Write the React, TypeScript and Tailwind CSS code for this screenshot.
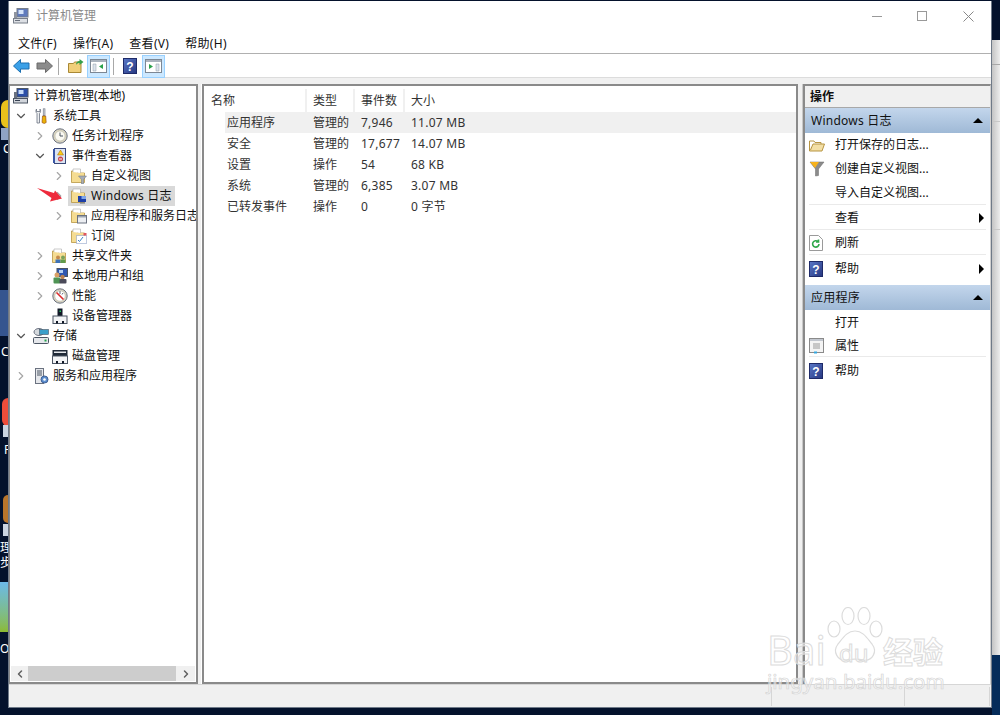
import type { ReactNode } from 'react';
import { ChevronDown, ChevronRight, ChevronLeft } from 'lucide-react';

function Ico({ children, size = 16 }: { children: ReactNode; size?: number }) {
  return (
    <svg width={size} height={size} viewBox="0 0 16 16" className="shrink-0">
      {children}
    </svg>
  );
}

function Computer({ size = 16, dim }: { size?: number; dim?: boolean }) {
  return (
    <Ico size={size}>
      <g opacity={dim ? 0.75 : 1}>
        <rect x="4" y="0.500" width="11" height="8.500" fill="#2b4fa8" stroke="#4b5563" />
        <rect x="5.500" y="2" width="5" height="4" fill="#c7dcf7" />
        <rect x="1" y="4" width="3" height="7" fill="#6b7280" />
        <rect x="0.500" y="10.500" width="14" height="4.500" fill="#d1d5db" stroke="#4b5563" />
        <rect x="2" y="12" width="5" height="1" fill="#374151" />
      </g>
    </Ico>
  );
}

function Tools() {
  return (
    <Ico>
      <path d="M3.500 1C2.500 2.500 2.800 4.500 4 5.500V15H6.500V5.500C7.700 4.500 8 2.500 7 1V3.500H3.500z" fill="#eceef0" stroke="#6b7280" strokeWidth="0.800" />
      <rect x="10.200" y="0.800" width="1.800" height="7" fill="#d1d5db" stroke="#6b7280" strokeWidth="0.600" />
      <path d="M9.500 8h3.200l.5 6.500-2 1-2.200-1z" fill="#eab308" stroke="#92400e" strokeWidth="0.600" />
    </Ico>
  );
}

function Clock() {
  return (
    <Ico>
      <circle cx="8" cy="8" r="7.200" fill="#d8d3c0" stroke="#6b7280" />
      <circle cx="8" cy="8" r="5" fill="#fbfaf3" stroke="#b8b8a8" strokeWidth="0.600" />
      <path d="M8 4.500V8h3" fill="none" stroke="#4b5563" strokeWidth="1" />
    </Ico>
  );
}

function EventViewer() {
  return (
    <Ico>
      <rect x="2.500" y="0.500" width="11" height="15" fill="#dbe4f3" stroke="#3b4a7a" />
      <rect x="1" y="1" width="2" height="14" fill="#3a56a5" />
      <path d="M8.500 2l3 5h-6z" fill="#facc15" stroke="#a16207" strokeWidth="0.500" />
      <circle cx="8.500" cy="11" r="2.500" fill="#c8414b" />
      <rect x="7" y="10.500" width="3" height="1" fill="#fff" />
    </Ico>
  );
}

function FolderBase() {
  return (
    <>
      <path d="M0.500 3V14.500H13.500V5H7L6 3z" fill="#f5dc92" stroke="#b79543" strokeWidth="0.800" />
      <path d="M2 4V1h7.500v4" fill="#fff" stroke="#a8a8a8" strokeWidth="0.600" />
      <rect x="1" y="5" width="12" height="9" fill="#f5dc92" />
    </>
  );
}

function FolderFilter() {
  return (
    <Ico>
      <FolderBase />
      <path d="M7.500 8h8l-3 3.500V16h-2v-4.500z" fill="#a7adb5" stroke="#6b7280" strokeWidth="0.500" />
    </Ico>
  );
}

function FolderWin() {
  return (
    <Ico>
      <FolderBase />
      <rect x="7" y="8" width="8" height="6" fill="#1d3fa8" />
      <rect x="10.500" y="8" width="4.500" height="3" fill="#7ea5ea" />
      <rect x="9" y="14.500" width="5" height="1" fill="#6b7280" />
    </Ico>
  );
}

function FolderBox() {
  return (
    <Ico>
      <FolderBase />
      <rect x="6.500" y="7.500" width="9" height="7.500" fill="#eceef2" stroke="#6b7280" />
      <rect x="7" y="8" width="8" height="1.500" fill="#9ca3af" />
    </Ico>
  );
}

function FolderSub() {
  return (
    <Ico>
      <FolderBase />
      <rect x="5.500" y="7.500" width="10" height="8" fill="#fff" stroke="#7f95c0" strokeDasharray="1 1" />
      <path d="M7 12l1.500 1.500L12 9" fill="none" stroke="#3b82c4" />
      <rect x="12.500" y="5" width="3" height="2.500" fill="#e0555f" />
    </Ico>
  );
}

function FolderShare() {
  return (
    <Ico>
      <FolderBase />
      <circle cx="6" cy="9.500" r="2" fill="#c58a4c" />
      <circle cx="11" cy="9.500" r="2" fill="#7aa25a" />
      <rect x="3.500" y="11.500" width="5" height="3.500" fill="#3f72b5" />
      <rect x="8.500" y="11.500" width="5" height="3.500" fill="#5f9b4c" />
    </Ico>
  );
}

function Users() {
  return (
    <Ico>
      <rect x="5" y="0.500" width="10.500" height="8" fill="#2f57b0" stroke="#4b5563" />
      <rect x="7" y="2" width="4" height="3" fill="#b6d0f2" />
      <circle cx="5" cy="7" r="2.500" fill="#d9a066" />
      <rect x="1.500" y="9.500" width="7" height="6" rx="1" fill="#4f9455" />
      <circle cx="10.500" cy="9" r="2.200" fill="#b98050" />
      <rect x="7.500" y="11" width="7" height="4.500" rx="1" fill="#4a4a5a" />
    </Ico>
  );
}

function Gauge() {
  return (
    <Ico>
      <circle cx="8" cy="8" r="7.200" fill="#d8d3c0" stroke="#6b7280" />
      <circle cx="8" cy="8" r="5.200" fill="#fff" stroke="#b3b3a3" strokeWidth="0.500" />
      <path d="M4.500 4.500l7 7" stroke="#d92b2b" strokeWidth="1.600" />
      <path d="M8 3v3M11 5l-1 1.500" stroke="#374151" strokeWidth="0.800" />
    </Ico>
  );
}

function Device() {
  return (
    <Ico>
      <rect x="5.500" y="0.500" width="5" height="8" fill="#111827" />
      <rect x="7.500" y="2.500" width="1.500" height="1.500" fill="#22c55e" />
      <rect x="1" y="8" width="14" height="7.500" fill="#f3f4f6" stroke="#4b5563" />
      <rect x="4" y="13" width="2" height="2.500" fill="#111827" />
      <rect x="10" y="13" width="2" height="2.500" fill="#111827" />
    </Ico>
  );
}

function Storage() {
  return (
    <Ico>
      <ellipse cx="6" cy="4" rx="5" ry="3.500" fill="#d5d9dd" stroke="#6b7280" />
      <rect x="6.500" y="1.500" width="9" height="5" fill="#3a9ec9" stroke="#4b5563" strokeWidth="0.600" />
      <rect x="0.500" y="9.500" width="15" height="6" rx="1" fill="#e5e7eb" stroke="#4b5563" />
      <rect x="11.500" y="11.500" width="2" height="2" fill="#22a34a" />
    </Ico>
  );
}

function Disk() {
  return (
    <Ico>
      <rect x="0.500" y="2" width="15" height="6" fill="#1f2937" />
      <rect x="2" y="3.500" width="12" height="1.500" fill="#e5e7eb" />
      <rect x="0.500" y="8" width="15" height="7.500" fill="#f3f4f6" stroke="#4b5563" />
      <rect x="4" y="13" width="2" height="2.500" fill="#111827" />
      <rect x="10" y="13" width="2" height="2.500" fill="#111827" />
    </Ico>
  );
}

function Services() {
  return (
    <Ico>
      <rect x="2.500" y="0.500" width="8" height="15" fill="#e5e7eb" stroke="#6b7280" />
      <path d="M4 3h5M4 5h5M4 7h5" stroke="#4b5563" />
      <circle cx="11.500" cy="11.500" r="3.500" fill="#5b8ecf" stroke="#3f5f94" />
      <circle cx="11.500" cy="11.500" r="1.300" fill="#fff" />
    </Ico>
  );
}

function Help({ size = 16 }: { size?: number }) {
  return (
    <svg width={size - 2} height={size} viewBox="0 0 14 16" className="shrink-0">
      <defs>
        <linearGradient id="helpBg" x1="0" y1="0" x2="1" y2="1">
          <stop offset="0" stopColor="#5a78c8" />
          <stop offset="1" stopColor="#26367f" />
        </linearGradient>
      </defs>
      <rect x="0.500" y="0.500" width="13" height="15" fill="url(#helpBg)" stroke="#1e2a68" />
      <text x="7" y="12.500" textAnchor="middle" fontSize="12" fontWeight="700" fill="#fff" fontFamily="Liberation Sans, sans-serif">?</text>
    </svg>
  );
}

const tree = [
  { pad: 'pl-[3px]', icon: <Computer />, label: '计算机管理(本地)', root: true },
  { pad: 'pl-[5px]', open: true, icon: <Tools />, label: '系统工具' },
  { pad: 'pl-[24px]', closed: true, icon: <Clock />, label: '任务计划程序' },
  { pad: 'pl-[24px]', open: true, icon: <EventViewer />, label: '事件查看器' },
  { pad: 'pl-[43px]', closed: true, icon: <FolderFilter />, label: '自定义视图' },
  { pad: 'pl-[43px]', closed: true, icon: <FolderWin />, label: 'Windows 日志', selected: true },
  { pad: 'pl-[43px]', closed: true, icon: <FolderBox />, label: '应用程序和服务日志' },
  { pad: 'pl-[43px]', icon: <FolderSub />, label: '订阅' },
  { pad: 'pl-[24px]', closed: true, icon: <FolderShare />, label: '共享文件夹' },
  { pad: 'pl-[24px]', closed: true, icon: <Users />, label: '本地用户和组' },
  { pad: 'pl-[24px]', closed: true, icon: <Gauge />, label: '性能' },
  { pad: 'pl-[24px]', icon: <Device />, label: '设备管理器' },
  { pad: 'pl-[5px]', open: true, icon: <Storage />, label: '存储' },
  { pad: 'pl-[24px]', icon: <Disk />, label: '磁盘管理' },
  { pad: 'pl-[5px]', closed: true, icon: <Services />, label: '服务和应用程序' },
];

const logs = [
  ['应用程序', '管理的', '7,946', '11.07 MB'],
  ['安全', '管理的', '17,677', '14.07 MB'],
  ['设置', '操作', '54', '68 KB'],
  ['系统', '管理的', '6,385', '3.07 MB'],
  ['已转发事件', '操作', '0', '0 字节'],
];

function ActionHeader({ label }: { label: string }) {
  return (
    <div className="h-[25px] flex items-center justify-between pl-[6px] pr-[7px] bg-gradient-to-b from-[#c3d6ec] to-[#9fb9d6] text-[#111]">
      <span className="tracking-[0.25px]">{label}</span>
      <span className="w-0 h-0 border-x-[5px] border-x-transparent border-b-[5px] border-b-black" />
    </div>
  );
}

function ActionItem({ icon, label, arrow, line, h = 'h-[24px]' }: { icon?: ReactNode; label: string; arrow?: boolean; line?: boolean; h?: string }) {
  return (
    <div className={`${h} mx-[4px] pt-[2px] flex items-center relative ${line ? 'border-b border-[#eaeaea]' : ''}`}>
      <span className="w-[26px] flex justify-start shrink-0">{icon}</span>
      <span className="text-[#111]">{label}</span>
      {arrow && <span className="absolute right-[2px] w-0 h-0 border-y-[5px] border-y-transparent border-l-[5px] border-l-black" />}
    </div>
  );
}

function DesktopText({ className, children }: { className: string; children: ReactNode }) {
  return <span className={`absolute text-white text-[12px] leading-[14px] ${className}`}>{children}</span>;
}

export default function App() {
  return (
    <div className="relative w-[1000px] h-[715px] overflow-hidden bg-[#04122c] text-[12px] font-['Noto_Sans','Noto_Sans_CJK_SC',sans-serif]">
      {/* desktop behind the window */}
      <div className="absolute left-0 top-[290px] w-[8px] h-[46px] bg-[#35558f]" />
      <div className="absolute left-[1px] top-[100px] w-[7px] h-[28px] rounded-l-full bg-[#e9c21c]" />
      <div className="absolute left-[1px] top-[128px] w-[7px] h-[12px] bg-[#8fa3c4]" />
      <div className="absolute left-[2px] top-[398px] w-[6px] h-[28px] rounded-l-full bg-[#ee4d3a]" />
      <div className="absolute left-[3px] top-[425px] w-[5px] h-[12px] bg-[#cbd5e1]" />
      <div className="absolute left-[3px] top-[495px] w-[5px] h-[28px] rounded-l-full bg-[#b9762c]" />
      <div className="absolute left-[3px] top-[524px] w-[5px] h-[12px] bg-[#cbd5e1]" />
      <div className="absolute left-0 top-[582px] w-[8px] h-[50px] bg-gradient-to-b from-[#6cb8e8] to-[#8cba2e]" />
      <DesktopText className="left-[3px] top-[142px]">C</DesktopText>
      <DesktopText className="left-[1px] top-[345px]">C</DesktopText>
      <DesktopText className="left-[4px] top-[443px]">F</DesktopText>
      <DesktopText className="left-0 top-[541px]">理</DesktopText>
      <DesktopText className="left-0 top-[556px]">步</DesktopText>
      <DesktopText className="left-0 top-[642px]">OL</DesktopText>
      <div className="absolute left-[992px] top-[40px] w-[8px] h-[615px] flex flex-col bg-gradient-to-r from-[#c4c4c4] to-[#ededed]">
        <div className="h-[25px] border-b border-[#a8a8a8]" />
        <div className="h-[57px] border-b border-[#c8c8c8]" />
        <div className="h-[108px] border-b border-[#c8c8c8]" />
      </div>
      <div className="absolute left-[992px] top-[655px] w-[8px] h-[60px] bg-[#052c5a]" />

      {/* window */}
      <div className="absolute left-[8px] top-[1px] w-[984px] h-[707px] flex flex-col bg-white border-l border-r border-b border-[#6f7a88]">
        <div className="h-[30px] shrink-0 flex items-center pl-[4px]">
          <Computer dim />
          <span className="ml-[7px] text-[#8a8a8a]">计算机管理</span>
          <div className="ml-auto flex items-center">
            <span className="w-[10px] h-px bg-[#999] mr-[35px]" />
            <span className="w-[10px] h-[10px] border border-[#999] mr-[36px]" />
            <svg width="11" height="11" viewBox="0 0 11 11" className="mr-[17px]">
              <path d="M0.500 0.500l10 10M10.500 0.500l-10 10" stroke="#888" strokeWidth="1" />
            </svg>
          </div>
        </div>
        <div className="h-[23px] shrink-0 flex items-center pl-[9px] pt-[3px] gap-[16px] tracking-[0.3px] text-[#111] border-b border-[#b0b0b0]">
          <span>文件(F)</span>
          <span>操作(A)</span>
          <span>查看(V)</span>
          <span>帮助(H)</span>
        </div>
        <div className="h-[24px] shrink-0 flex items-center pl-[4px] pt-[1px] border-b border-[#dcdcdc]">
          <svg width="17" height="14" viewBox="0 0 17 14" className="shrink-0">
            <path d="M0.500 7L7.500 0.500V4H16V10H7.500V13.500z" fill="#3aa0e8" stroke="#1c6fb0" />
          </svg>
          <svg width="17" height="14" viewBox="0 0 17 14" className="shrink-0 ml-[6px]">
            <path d="M16.500 7L9.500 0.500V4H1V10H9.500V13.500z" fill="#8b8b8b" stroke="#6a6a6a" />
          </svg>
          <span className="w-px h-[17px] bg-[#a8a8a8] ml-[5px]" />
          <span className="ml-[9px] shrink-0">
            <svg width="16" height="16" viewBox="0 0 16 16">
              <path d="M0.500 5.500h5l1-1.500h6.500v10.500H0.500z" fill="#f0cf7a" stroke="#a98835" />
              <path d="M8 7c0-3 1.500-4 3.500-4V1l4 3-4 3V5c-1.500 0-2.500.500-3.500 2z" fill="#35a04a" />
            </svg>
          </span>
          <span className="ml-[3px] w-[23px] h-[23px] flex items-center justify-center bg-[#cce8ff] border border-[#99d1ff]">
            <svg width="17" height="14" viewBox="0 0 17 14">
              <rect x="0.500" y="0.500" width="16" height="13" fill="#fff" stroke="#7c8794" />
              <rect x="1" y="1" width="15" height="2" fill="#aab3be" />
              <path d="M3 5h3v7H3z" fill="#dbe3ec" stroke="#8c98a6" strokeWidth="0.500" />
              <path d="M13 5v5L9 7.500z" fill="#2aa24a" />
            </svg>
          </span>
          <span className="w-px h-[17px] bg-[#a8a8a8] ml-[3px]" />
          <span className="ml-[9px]"><Help size={16} /></span>
          <span className="ml-[5px] w-[23px] h-[23px] flex items-center justify-center bg-[#cce8ff] border border-[#99d1ff]">
            <svg width="17" height="14" viewBox="0 0 17 14">
              <rect x="0.500" y="0.500" width="16" height="13" fill="#fff" stroke="#7c8794" />
              <rect x="1" y="1" width="15" height="2" fill="#aab3be" />
              <path d="M11 5h3v7h-3z" fill="#dbe3ec" stroke="#8c98a6" strokeWidth="0.500" />
              <path d="M4 5v5l4-2.500z" fill="#2aa24a" />
            </svg>
          </span>
        </div>

        {/* three panes */}
        <div className="flex-1 min-h-0 flex bg-[#f0f0f0] pt-[6px]">
          <div className="w-[189px] shrink-0 flex flex-col bg-white border-y-2 border-r-2 border-[#8a8a8a] border-l border-l-[#8a8a8a] overflow-hidden">
            <div className="flex-1 relative">
              {tree.map((n) => (
                <div key={n.label} className={`h-[20px] flex items-center whitespace-nowrap ${n.pad}`}>
                  {!n.root && (
                    <span className="w-[18px] shrink-0 flex">
                      {n.open && <ChevronDown size={14} strokeWidth={2} className="text-[#555] -ml-px" />}
                      {n.closed && <ChevronRight size={14} strokeWidth={2} className="text-[#a6a6a6] -ml-px" />}
                    </span>
                  )}
                  <span className={`flex items-center h-[20px] gap-[4px] text-[#111] ${n.selected ? 'bg-[#d9d9d9] px-[3px] -ml-[3px] tracking-[0.25px]' : ''}`}>
                    {n.icon}
                    <span className={n.root ? 'ml-[1px]' : ''}>{n.label}</span>
                  </span>
                </div>
              ))}
              {/* annotation arrow */}
              <svg width="26" height="14" viewBox="0 0 26 14" className="absolute left-[27px] top-[102px]">
                <path d="M0 0L17 5 18 2.500 25 10.500 13 13.500 14.500 10z" fill="#ee2a3c" />
              </svg>
            </div>
            <div className="h-[15px] mx-px mb-px flex items-center shrink-0 bg-[#f0f0f0]">
              <span className="w-[17px] flex justify-center"><ChevronLeft size={12} strokeWidth={3} className="text-[#606060]" /></span>
              <span className="w-[148px] h-full bg-[#cdcdcd]" />
              <span className="flex-1 flex justify-center"><ChevronRight size={12} strokeWidth={3} className="text-[#606060]" /></span>
            </div>
          </div>

          <div className="w-[4px] shrink-0 border-r border-white" />

          <div className="w-[596px] shrink-0 bg-white border-2 border-[#8a8a8a]">
            <div className="h-[23px] flex items-center text-[#333] mt-[3px]">
              <span className="w-[103px] h-full pl-[7px] flex items-center border-r-2 border-[#f0f0f0]">名称</span>
              <span className="w-[48px] h-full pl-[6px] flex items-center border-r-2 border-[#f0f0f0]">类型</span>
              <span className="w-[50px] h-full pl-[6px] flex items-center border-r-2 border-[#f0f0f0]">事件数</span>
              <span className="pl-[6px]">大小</span>
            </div>
            {logs.map((r, i) => (
              <div key={r[0]} className={`h-[21px] ml-[21px] flex items-center text-[#333] ${i === 0 ? 'bg-[#f0f0f0]' : ''}`}>
                <span className="w-[88px] pl-[2px]">{r[0]}</span>
                <span className="w-[48px]">{r[1]}</span>
                <span className="w-[50px] tracking-[0.25px]">{r[2]}</span>
                <span className="tracking-[0.25px]">{r[3]}</span>
              </div>
            ))}
          </div>

          <div className="w-[5px] shrink-0 border-r border-[#c8c8c8]" />

          <div className="flex-1 min-w-0 bg-white border-t-2 border-l-2 border-[#8a8a8a] border-r border-r-[#d0d0d0]">
            <div className="h-[22px] flex items-center pl-[5px] bg-[#f0f0f0] border-b border-[#a8a8a8] font-bold text-[#111]">操作</div>
            <ActionHeader label="Windows 日志" />
            <ActionItem
              h="h-[22px]"
              icon={
                <svg width="16" height="14" viewBox="0 0 16 14">
                  <path d="M0.500 3V13H13L15.500 6H4L1.500 12" fill="#f3dfa6" stroke="#b79543" />
                  <path d="M0.500 3H5l1 1.500h6V6" fill="none" stroke="#b79543" />
                </svg>
              }
              label="打开保存的日志..."
            />
            <ActionItem
              h="h-[25px]"
              icon={
                <svg width="16" height="16" viewBox="0 0 16 16">
                  <path d="M1 1h14L9.500 8v6.500L6.500 15V8z" fill="#8b8b8b" stroke="#6b6b6b" strokeWidth="0.500" />
                  <path d="M1 1h9L6 7z" fill="#f7b21c" />
                </svg>
              }
              label="创建自定义视图..."
            />
            <ActionItem label="导入自定义视图..." line h="h-[25px]" />
            <ActionItem label="查看" arrow line h="h-[25px]" />
            <ActionItem
              h="h-[25px]"
              icon={
                <svg width="14" height="16" viewBox="0 0 14 16">
                  <path d="M0.500 0.500H9.500L13.500 4.500V15.500H0.500z" fill="#fff" stroke="#9a9a9a" />
                  <path d="M10 9a3.200 3.200 0 1 1-1-2.400M9.500 4.500v2.500H7" fill="none" stroke="#2fa84a" strokeWidth="1.600" />
                </svg>
              }
              label="刷新"
              line
            />
            <ActionItem icon={<Help />} label="帮助" arrow h="h-[25px]" />
            <div className="h-[5px]" />
            <ActionHeader label="应用程序" />
            <ActionItem label="打开" h="h-[23px]" />
            <ActionItem
              icon={
                <svg width="16" height="16" viewBox="0 0 16 16">
                  <rect x="0.500" y="0.500" width="14" height="14" fill="#f4f4f4" stroke="#8a8a8a" />
                  <rect x="1" y="1" width="13" height="2" fill="#c2c7cf" />
                  <path d="M4 6h7M4 8h7M4 10h7" stroke="#9a9a9a" />
                  <rect x="5" y="13.500" width="3" height="2" fill="#35a7e0" />
                </svg>
              }
              label="属性"
              line
            />
            <ActionItem icon={<Help />} label="帮助" h="h-[25px]" />
          </div>
        </div>

        <div className="h-[23px] shrink-0 flex bg-[#f0f0f0] border-t border-[#d6d6d6] pt-[2px] pb-[1px]">
          <span className="w-[763px] border-r border-[#d6d6d6]" />
          <span className="w-[133px] border-r border-[#d6d6d6]" />
          <span className="w-[85px] border-r border-[#d6d6d6]" />
        </div>
      </div>

      {/* watermark */}
      <div className="absolute left-[765px] top-[605px] w-[190px] h-[92px] pointer-events-none select-none">
        <svg width="56" height="60" viewBox="0 0 56 60" className="absolute left-[62px] top-[2px]">
          <g fill="rgba(255,255,255,0.6)" stroke="#dcdcdc" strokeWidth="1.200">
            <ellipse cx="7" cy="22" rx="6" ry="8" />
            <ellipse cx="21" cy="9" rx="6" ry="8.500" />
            <ellipse cx="37" cy="9" rx="6" ry="8.500" />
            <ellipse cx="49" cy="22" rx="6" ry="8" />
            <path d="M28 24c8 0 12 7 17 13 6 8 0 17-8 16-5-1-13-1-18 0-8 1-14-8-8-16 5-6 9-13 17-13z" />
          </g>
        </svg>
        <span className="absolute left-[2px] top-[25px] text-[40px] leading-[40px] text-[rgba(255,255,255,0.5)] [-webkit-text-stroke:1px_#dcdcdc]">Bai</span>
        <span className="absolute left-[74px] top-[36px] text-[24px] leading-[24px] text-[rgba(255,255,255,0.5)] [-webkit-text-stroke:1px_#dcdcdc]">du</span>
        <span className="absolute left-[118px] top-[30px] text-[30px] leading-[34px] font-bold text-white [-webkit-text-stroke:1px_#dcdcdc]">经验</span>
        <span className="absolute left-[2px] top-[64px] text-[20.500px] leading-[24px] text-[rgba(255,255,255,0.5)] [-webkit-text-stroke:0.7px_#d4d4d4]">jingyan.baidu.com</span>
      </div>
    </div>
  );
}
